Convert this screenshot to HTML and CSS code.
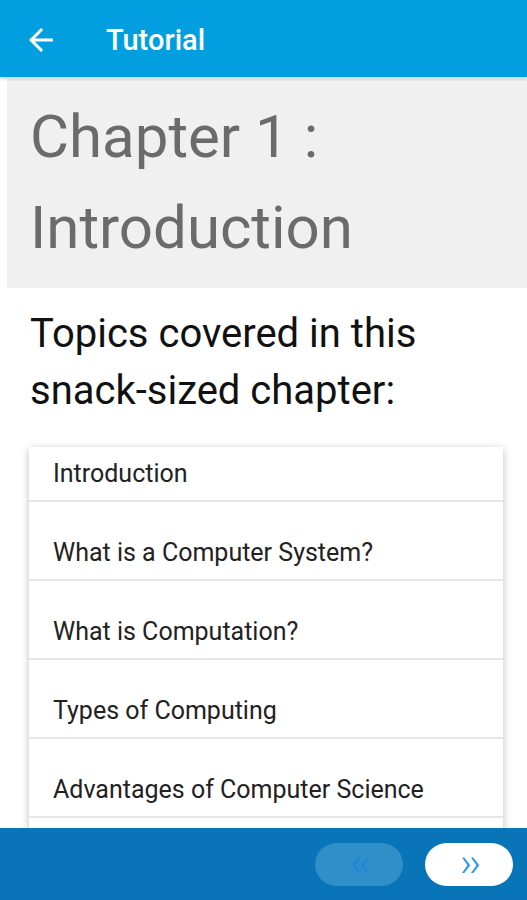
FILE: index.html
```html
<!DOCTYPE html>
<html lang="en">
<head>
    <meta charset="UTF-8">
    <meta name="viewport" content="width=device-width, initial-scale=1.0">
    <title>Tutorial</title>
    <link rel="stylesheet" href="styles.css">
</head>
<body>
    <div class="app">
        <!-- Top app bar -->
        <header class="appbar">
            <svg class="back" viewBox="0 0 24 24">
                <path d="M20 11H7.83l5.59-5.59L12 4l-8 8 8 8 1.41-1.41L7.83 13H20v-2z" fill="#fff"/>
            </svg>
            <h1>Tutorial</h1>
        </header>

        <main class="content">
            <div class="chapter">Chapter 1 : Introduction</div>
            <p class="intro">Topics covered in this snack-sized chapter:</p>

            <ul class="topics">
                <li class="first">Introduction</li>
                <li>What is a Computer System?</li>
                <li>What is Computation?</li>
                <li>Types of Computing</li>
                <li>Advantages of Computer Science</li>
                <li>Summary</li>
            </ul>
        </main>

        <!-- Bottom navigation -->
        <footer class="bottombar">
            <button class="nav prev" disabled>&lsaquo;&lsaquo;</button>
            <button class="nav next">&rsaquo;&rsaquo;</button>
        </footer>
    </div>
</body>
</html>
```

FILE: styles.css
```css
html, body {
    margin: 0;
    padding: 0;
    height: 100%;
}
body {
    font-family: Roboto, "Noto Sans", sans-serif;
    background: #fff;
    overflow: hidden;
}
.app {
    height: 900px;
    display: flex;
    flex-direction: column;
    position: relative;
}
.appbar {
    height: 77px;
    flex: none;
    background: #019fe0;
    display: flex;
    align-items: center;
    box-shadow: 0 2px 3px rgba(0, 0, 0, 0.2);
    position: relative;
    z-index: 2;
}
.back {
    width: 36px;
    height: 36px;
    margin: 3px 0 0 23px;
}
.appbar h1 {
    margin: 2px 0 0 47px;
    color: #fff;
    font-size: 29px;
    font-weight: 500;
}
.content {
    flex: 1;
    overflow: hidden;
    padding-top: 2px;
}
.chapter {
    margin-left: 7px;
    background: #f0f0f0;
    color: #6b6b6b;
    font-size: 60px;
    line-height: 91px;
    padding: 12px 40px 0 23px;
    height: 197px;
}
.intro {
    margin: 17px 60px 0 30px;
    font-size: 40px;
    line-height: 57px;
    color: #111;
}
.topics {
    list-style: none;
    margin: 28px 24px 0 29px;
    padding: 0;
    background: #fff;
    box-shadow: 0 2px 8px rgba(0, 0, 0, 0.25);
}
.topics li {
    font-size: 25px;
    line-height: 28px;
    color: #222;
    padding: 37px 24px 12px;
    border-bottom: 2px solid #e6e6e6;
}
.topics li.first {
    padding-top: 13px;
}
.bottombar {
    position: absolute;
    left: 0;
    right: 0;
    bottom: 0;
    height: 72px;
    background: #0a74b8;
    display: flex;
    justify-content: flex-end;
    align-items: center;
    gap: 22px;
    padding-right: 14px;
    box-sizing: border-box;
    z-index: 3;
}
.nav {
    width: 88px;
    height: 43px;
    border: none;
    border-radius: 22px;
    font-family: Roboto, sans-serif;
    font-size: 40px;
    font-weight: 300;
    line-height: 40px;
    letter-spacing: -3px;
    padding: 0 0 4px;
    color: #2196e0;
}
.nav.prev {
    background: #2f8fc9;
    color: #1a86da;
}
.nav.next {
    background: #fff;
}
```
